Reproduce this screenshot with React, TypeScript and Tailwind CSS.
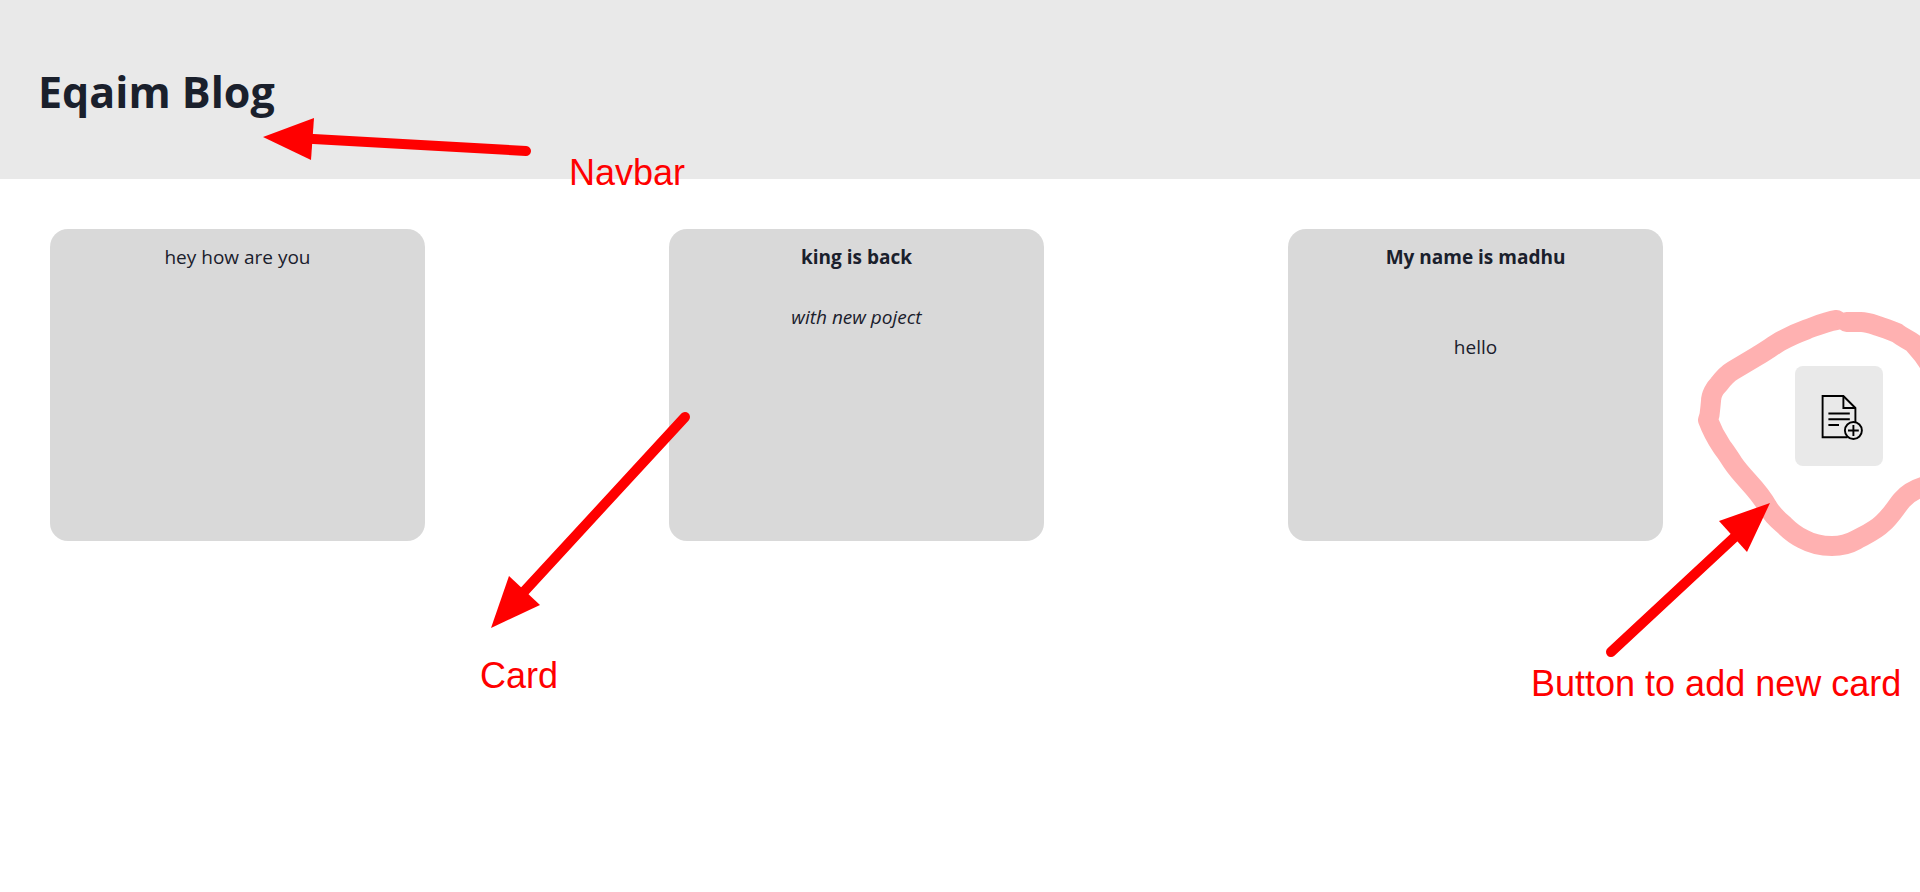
type Line = { text: string; className: string };

const cards: Line[][] = [
  [{ text: 'hey how are you', className: 'font-normal' }],
  [
    { text: 'king is back', className: 'font-bold' },
    { text: 'with new poject', className: 'mt-[30px] italic' },
  ],
  [
    { text: 'My name is madhu', className: 'font-bold' },
    { text: 'hello', className: 'mt-[60px]' },
  ],
];

function AddNoteIcon() {
  return (
    <svg
      viewBox="19 25 50 50"
      className="size-[50px]"
      fill="none"
      stroke="#000"
      strokeWidth="1.9"
      aria-hidden="true"
    >
      <path d="M52.5 71.3H27.6V30H48.4L60.4 42V56" />
      <path d="M48.4 30V42H60.4" />
      <path d="M33.4 47.5H54.8M33.4 53.2H54.8M33.4 59H44" />
      <circle cx="58.4" cy="64.5" r="8.5" />
      <path d="M53 64.5H63.8M58.4 59.1V69.9" />
    </svg>
  );
}

function Annotations() {
  return (
    <div className="pointer-events-none absolute inset-0 overflow-hidden font-['Liberation_Sans',Arial,sans-serif] text-4xl text-[#ff0000]">
      <svg className="absolute top-0 left-0 h-[892px] w-[1920px]" viewBox="0 0 1920 892" fill="none" aria-hidden="true">
        <path
          d="M1836.5 320C1826 321.500 1816 326 1806.500 329.500C1797 333 1788 337 1780 341.500C1772 346.500 1764 352 1756.500 356.500L1733 370.500C1727 374 1722 380 1719 384C1715 388 1711 395 1711 401C1710.500 407 1710 411 1709.500 415L1708 420C1711 428 1716 438 1722 447C1726 452 1729 457 1733 463C1743 478 1758 489 1767 506C1771 513 1778 520 1784 525C1790 531 1797 536 1803 539C1812 544 1822 546 1832 546C1842 546 1849 544 1856 540C1865 535 1875 531 1883 523C1891 516 1896 507 1902 500C1908 493 1916 488 1930 485"
          stroke="#ffb1b1"
          strokeWidth="20"
          strokeLinecap="round"
          strokeLinejoin="round"
        />
        <path
          d="M1846.500 322H1861C1867 322 1872 324 1878 326C1884 328 1891 330 1897 333C1902 337 1907 339 1913 343C1917 348 1922 352 1928 362"
          stroke="#ffb1b1"
          strokeWidth="20"
          strokeLinecap="round"
          strokeLinejoin="round"
        />
        <g stroke="#ff0000" strokeWidth="10" strokeLinecap="round">
          <path d="M526 151L309 138.800" />
          <path d="M685 417L520 596" />
          <path d="M1611 652L1739 533" />
        </g>
        <g fill="#ff0000">
          <path d="M263 137L314 118L311 160Z" />
          <path d="M491 628L509 576L540 605Z" />
          <path d="M1770 503L1719 521L1747 552Z" />
        </g>
      </svg>
      <p className="absolute top-[153px] left-[569px]">Navbar</p>
      <p className="absolute top-[656px] left-[480px]">Card</p>
      <p className="absolute top-[664px] left-[1531px] whitespace-nowrap">Button to add new card</p>
    </div>
  );
}

export default function App() {
  return (
    <div className="relative min-h-screen bg-white font-['Segoe_UI','Open_Sans','Noto_Sans',sans-serif] text-[#1a202c]">
      <header className="bg-[#e9e9e9] px-[38px] pt-[60px] pb-[55px]">
        <h1 className="text-[43px] leading-[64px] font-bold">Eqaim Blog</h1>
      </header>
      <main className="flex items-start gap-[132px] py-[50px] pr-[37px] pl-[50px]">
        <section className="flex flex-1 justify-between">
          {cards.map((lines) => (
            <article
              key={lines[0].text}
              className="h-[312px] w-[375px] rounded-[18px] bg-[#d9d9d9] py-[13px] text-center text-[19px] leading-[30px]"
            >
              {lines.map((line) => (
                <p key={line.text} className={line.className}>
                  {line.text}
                </p>
              ))}
            </article>
          ))}
        </section>
        <button
          type="button"
          aria-label="Add new card"
          className="mt-[137px] flex h-[100px] w-[88px] shrink-0 items-center justify-center rounded-lg bg-[#e9e9e9]"
        >
          <AddNoteIcon />
        </button>
      </main>
      <Annotations />
    </div>
  );
}
